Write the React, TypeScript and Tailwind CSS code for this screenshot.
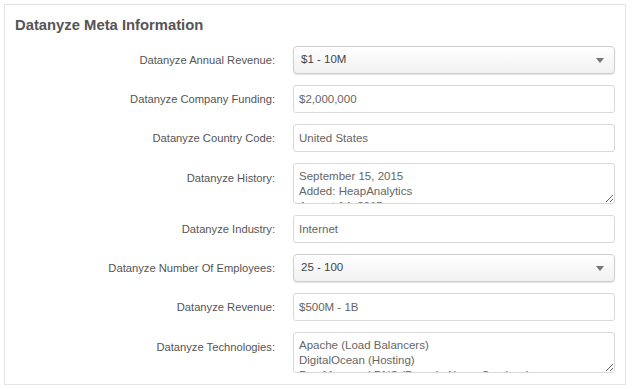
const font = { fontFamily: '"Liberation Sans", Arial, sans-serif' };

type Field =
  | { label: string; kind: 'select'; value: string }
  | { label: string; kind: 'input'; value: string }
  | { label: string; kind: 'textarea'; value: string };

const fields: Field[] = [
  { label: 'Datanyze Annual Revenue:', kind: 'select', value: '$1 - 10M' },
  { label: 'Datanyze Company Funding:', kind: 'input', value: '$2,000,000' },
  { label: 'Datanyze Country Code:', kind: 'input', value: 'United States' },
  {
    label: 'Datanyze History:',
    kind: 'textarea',
    value: 'September 15, 2015\nAdded: HeapAnalytics\nAugust 14, 2015\nAdded: Optimizely',
  },
  { label: 'Datanyze Industry:', kind: 'input', value: 'Internet' },
  { label: 'Datanyze Number Of Employees:', kind: 'select', value: '25 - 100' },
  { label: 'Datanyze Revenue:', kind: 'input', value: '$500M - 1B' },
  {
    label: 'Datanyze Technologies:',
    kind: 'textarea',
    value: 'Apache (Load Balancers)\nDigitalOcean (Hosting)\nDyn Managed DNS (Domain Name Services)\nGoogle Analytics',
  },
];

const Control = ({ field }: { field: Field }) => {
  if (field.kind === 'select') {
    return (
      <div className="flex h-[28px] items-center justify-between rounded-[4px] border border-[#cfcfcf] bg-gradient-to-b from-white to-[#f1f1f1] pl-[7px] pr-[10px] text-[11.5px] text-[#444] shadow-[0_1px_1px_rgba(0,0,0,0.12)]">
        <span>{field.value}</span>
        <svg width="8" height="5" viewBox="0 0 8 5">
          <path d="M0 0 L8 0 L4 5 Z" fill="#777" />
        </svg>
      </div>
    );
  }
  if (field.kind === 'textarea') {
    return (
      <textarea
        readOnly
        value={field.value}
        style={font}
        className="block h-[41px] w-full resize-y overflow-hidden rounded-[3px] border border-[#d9d9d9] bg-white px-[5px] pt-[5px] text-[11.5px] leading-[15px] text-[#666] outline-none"
      />
    );
  }
  return (
    <input
      readOnly
      value={field.value}
      style={font}
      className="block h-[28px] w-full rounded-[3px] border border-[#d9d9d9] bg-white px-[5px] text-[11.5px] text-[#666] outline-none"
    />
  );
};

export default function App() {
  return (
    <div className="h-[389px] w-[632px] bg-white p-[4px]" style={font}>
      <div className="h-[381px] w-[622px] border border-[#e4e4e4] pl-[10px] pr-[10px] pt-[12px]">
        <h2 className="text-[14.8px] font-bold leading-[17px] text-[#555]">Datanyze Meta Information</h2>
        <div className="mt-[12px] flex flex-col gap-[11px]">
          {fields.map((field) => (
            <div key={field.label} className="flex items-start gap-[18px]">
              <div
                className={`w-[260px] shrink-0 text-right text-[11.2px] text-[#555] ${
                  field.kind === 'textarea' ? 'pt-[7px]' : 'leading-[28px]'
                }`}
              >
                {field.label}
              </div>
              <div className="min-w-0 flex-1">
                <Control field={field} />
              </div>
            </div>
          ))}
        </div>
      </div>
    </div>
  );
}
